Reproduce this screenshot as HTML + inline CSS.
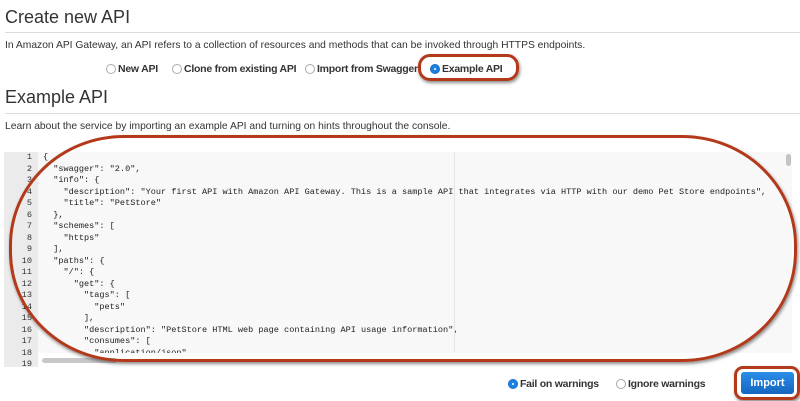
<!DOCTYPE html>
<html><head><meta charset="utf-8"><style>
body{margin:0;width:800px;height:401px;overflow:hidden;background:#fff;font-family:"Liberation Sans",Arial,sans-serif;color:#333;position:relative}
.abs{position:absolute}
h1{position:absolute;margin:0;font-weight:normal;font-size:18px;color:#333;left:5px}
.hr{position:absolute;left:5px;right:0;height:1px;background:#ddd}
.p{position:absolute;left:5px;font-size:10.3px;color:#333}
.r{position:absolute;font-size:10.5px;font-weight:bold;color:#333;white-space:nowrap;letter-spacing:-0.25px}
.r i{display:inline-block;width:10px;height:10px;border:1px solid #aaa;border-radius:50%;vertical-align:-2px;margin-right:2px;background:#fff;box-sizing:border-box}
.r i.on{background:#1a82e2;border:1px solid #1a6fc0;position:relative}
.r i.on:after{content:"";position:absolute;left:3px;top:3px;width:2px;height:2px;background:#fff;border-radius:50%}
.ed{position:absolute;left:4px;top:152px;width:788px;height:215px;background:#f8f8f8;overflow:hidden}
.gut{position:absolute;left:0;top:0;width:34px;height:215px;background:#ebebeb;font-family:"Liberation Mono",monospace;font-size:8.6px;line-height:11.5px;text-align:right;color:#333}
.gut div{padding-right:6px}
.code{position:absolute;left:39px;top:0;font-family:"Liberation Mono",monospace;font-size:8.55px;line-height:11.5px;white-space:pre;color:#222}
.ring{position:absolute;border:3.5px solid #b3391b;box-shadow:1px 2px 3px rgba(0,0,0,.45)}
</style></head><body>
<h1 style="top:7px">Create new API</h1>
<div class="hr" style="top:32px"></div>
<div class="p" style="top:40px">In Amazon API Gateway, an API refers to a collection of resources and methods that can be invoked through HTTPS endpoints.</div>
<div class="r" style="left:106px;top:63px"><i></i>New API</div>
<div class="r" style="left:172px;top:63px"><i></i>Clone from existing API</div>
<div class="r" style="left:305px;top:63px"><i></i>Import from Swagger</div>
<div class="r" style="left:430px;top:63px"><i class="on"></i>Example API</div>
<div class="ring" style="left:418px;top:54px;width:95px;height:21px;border-radius:12px"></div>
<h1 style="top:87px">Example API</h1>
<div class="hr" style="top:113px"></div>
<div class="p" style="top:121px">Learn about the service by importing an example API and turning on hints throughout the console.</div>
<div class="ed">
<div class="gut"><div>1</div><div>2</div><div>3</div><div>4</div><div>5</div><div>6</div><div>7</div><div>8</div><div>9</div><div>10</div><div>11</div><div>12</div><div>13</div><div>14</div><div>15</div><div>16</div><div>17</div><div>18</div><div>19</div></div>
<div class="code">{
  "swagger": "2.0",
  "info": {
    "description": "Your first API with Amazon API Gateway. This is a sample API that integrates via HTTP with our demo Pet Store endpoints",
    "title": "PetStore"
  },
  "schemes": [
    "https"
  ],
  "paths": {
    "/": {
      "get": {
        "tags": [
          "pets"
        ],
        "description": "PetStore HTML web page containing API usage information",
        "consumes": [
          "application/json"</div>
<div class="abs" style="left:34px;top:201px;width:754px;height:14px;background:#fff"></div>
<div class="abs" style="left:38px;top:206px;width:75px;height:5px;background:#c8c8c8;border-radius:3px"></div>
<div class="abs" style="left:450px;top:0;width:1px;height:200px;background:#e4e4e4"></div>
<div class="abs" style="left:782px;top:2px;width:5px;height:12px;background:#c4c4c4;border-radius:3px"></div>
</div>
<div class="ring" style="left:9px;top:135px;width:782px;height:221px;border-radius:115px/110px"></div>
<div class="r" style="left:508px;top:378px"><i class="on"></i>Fail on warnings</div>
<div class="r" style="left:616px;top:378px"><i></i>Ignore warnings</div>
<div class="abs" style="left:741px;top:372px;width:53px;height:22px;background:linear-gradient(#2a8ee8,#1565c0);border-radius:3px;color:#fff;font-size:11px;font-weight:bold;text-align:center;line-height:22px">Import</div>
<div class="ring" style="left:734px;top:366px;width:60px;height:28px;border-radius:9px"></div>
</body></html>
